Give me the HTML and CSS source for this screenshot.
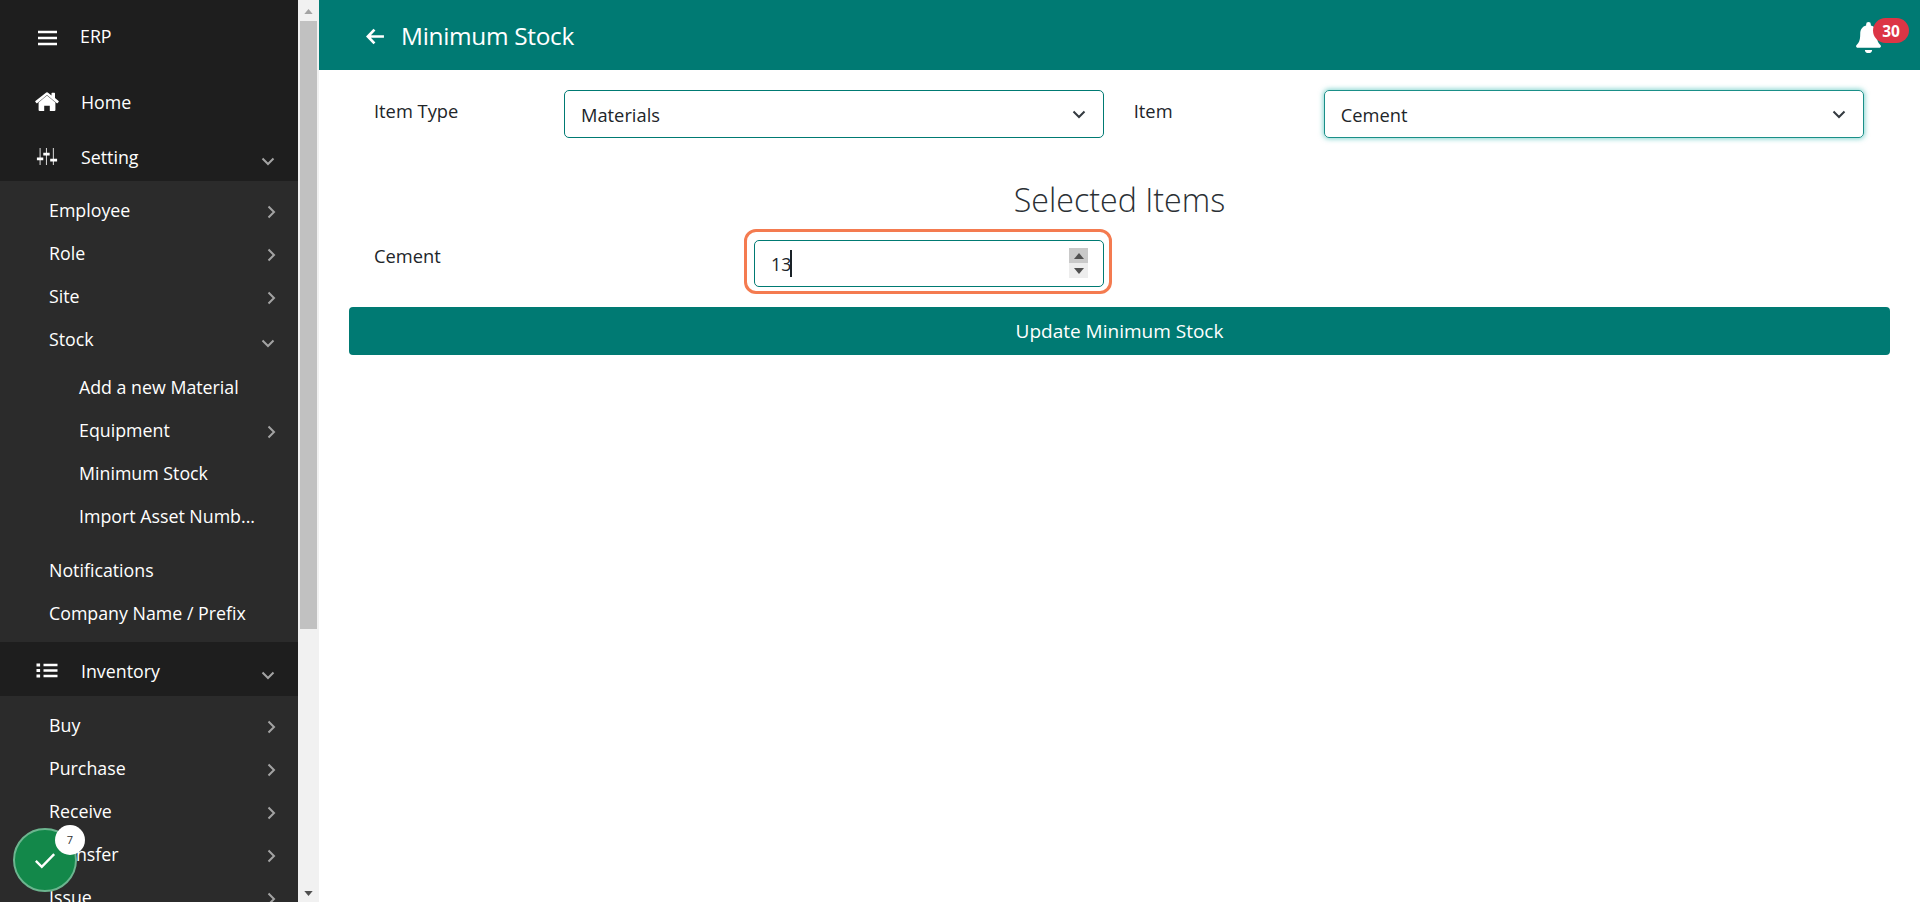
FILE: index.html
```html
<!DOCTYPE html>
<html lang="en">
<head>
<meta charset="utf-8">
<title>Minimum Stock</title>
<link rel="stylesheet" href="styles.css">
</head>
<body>
<div class="app">
  <aside class="sidebar">
    <div class="brand">
      <svg class="burger" viewBox="0 0 19 16"><path d="M0 2h19M0 8h19M0 14h19"/></svg>
      <span>ERP</span>
    </div>
    <nav>
      <div class="top home">
        <svg class="ticon house" viewBox="0 0 24 20"><path fill="#fff" d="M12 3.600 3.600 10.500V18a1 1 0 0 0 1 1h4.600v-5.200h5.600V19h4.600a1 1 0 0 0 1-1v-7.500L12 3.600zM23.600 9 20 6V1.400a.6.6 0 0 0-.6-.6h-2.300a.6.6 0 0 0-.6.6v2.100L13.400.9a2.200 2.200 0 0 0-2.800 0L.4 9a.6.6 0 0 0-.1.8l1 1.300a.6.6 0 0 0 .8.1L12 2.900l9.900 8.300a.6.6 0 0 0 .8-.1l1-1.300a.6.6 0 0 0-.1-.8z"/></svg>
        <span>Home</span>
      </div>
      <div class="top setting">
        <svg class="ticon" viewBox="0 0 19 16"><path class="thin" d="M3 0v16M9 0v16M15.500 0v16"/><path fill="#fff" d="M0 9h6v2.600H0zM6 4.500h6v2.600H6zM12.500 10H19v2.600h-6.500z"/></svg>
        <span>Setting</span>
        <svg class="down" viewBox="0 0 14 9"><path d="M1.500 1.500 7 7l5.500-5.500"/></svg>
      </div>
      <ul class="sub">
        <li>Employee<svg class="right" viewBox="0 0 9 14"><path d="M1.500 1.500 7 7l-5.500 5.500"/></svg></li>
        <li>Role<svg class="right" viewBox="0 0 9 14"><path d="M1.500 1.500 7 7l-5.500 5.500"/></svg></li>
        <li>Site<svg class="right" viewBox="0 0 9 14"><path d="M1.500 1.500 7 7l-5.500 5.500"/></svg></li>
        <li>Stock<svg class="down sm" viewBox="0 0 14 9"><path d="M1.500 1.500 7 7l5.500-5.500"/></svg></li>
        <li class="nested first">Add a new Material</li>
        <li class="nested">Equipment<svg class="right" viewBox="0 0 9 14"><path d="M1.500 1.500 7 7l-5.500 5.500"/></svg></li>
        <li class="nested">Minimum Stock</li>
        <li class="nested last">Import Asset Numb...</li>
        <li>Notifications</li>
        <li>Company Name / Prefix</li>
      </ul>
      <div class="top inventory">
        <svg class="ticon" viewBox="0 0 21 17"><path class="thick" d="M7 3h14M7 8.500h14M7 14h14"/><path fill="#fff" d="M0 1.500h3.600v3H0zM0 7h3.600v3H0zM0 12.500h3.600v3H0z"/></svg>
        <span>Inventory</span>
        <svg class="down" viewBox="0 0 14 9"><path d="M1.500 1.500 7 7l5.500-5.500"/></svg>
      </div>
      <ul class="sub">
        <li>Buy<svg class="right" viewBox="0 0 9 14"><path d="M1.500 1.500 7 7l-5.500 5.500"/></svg></li>
        <li>Purchase<svg class="right" viewBox="0 0 9 14"><path d="M1.500 1.500 7 7l-5.500 5.500"/></svg></li>
        <li>Receive<svg class="right" viewBox="0 0 9 14"><path d="M1.500 1.500 7 7l-5.500 5.500"/></svg></li>
        <li>Transfer<svg class="right" viewBox="0 0 9 14"><path d="M1.500 1.500 7 7l-5.500 5.500"/></svg></li>
        <li>Issue<svg class="right" viewBox="0 0 9 14"><path d="M1.500 1.500 7 7l-5.500 5.500"/></svg></li>
      </ul>
    </nav>
  </aside>
  <div class="scrollbar">
    <svg class="arrow" viewBox="0 0 10 6"><path d="M5 0l5 6H0z"/></svg>
    <div class="thumb"></div>
    <svg class="arrow" viewBox="0 0 10 6"><path d="M0 0h10L5 6z"/></svg>
  </div>
  <main class="main">
    <header class="header">
      <svg class="back" viewBox="0 0 18 16"><path d="M17 8H2M8 1.500 1.700 8 8 14.500"/></svg>
      <h1>Minimum Stock</h1>
      <div class="bell">
        <svg viewBox="0 0 24 30"><path fill="#fff" d="M12 0a2.300 2.300 0 0 0-2.300 2.300v1.200C6 4.400 4 7.500 4 11.500c0 6.500-1.500 8.500-3.300 10.500-.6.700-.7 1-.7 1.500 0 .9.700 1.500 1.600 1.500h20.800c.9 0 1.600-.6 1.600-1.500 0-.5-.1-.8-.7-1.500C21.500 20 20 18 20 11.500c0-4-2-7.100-5.700-8V2.300A2.300 2.300 0 0 0 12 0zM8.500 27a3.500 3 0 0 0 7 0z"/></svg>
        <span class="count">30</span>
      </div>
    </header>
    <section class="content">
      <div class="filters">
        <div class="field">
          <label>Item Type</label>
          <div class="select">Materials<svg viewBox="0 0 14 9"><path d="M1.500 1.500 7 7l5.500-5.500"/></svg></div>
        </div>
        <div class="field">
          <label>Item</label>
          <div class="select focus">Cement<svg viewBox="0 0 14 9"><path d="M1.500 1.500 7 7l5.500-5.500"/></svg></div>
        </div>
      </div>
      <h2>Selected Items</h2>
      <div class="stock-row">
        <label>Cement</label>
        <div class="highlight">
          <div class="number">
            <span class="val">13</span><span class="caret"></span>
            <div class="spin">
              <span class="up"><svg viewBox="0 0 10 6"><path d="M5 0l5 6H0z"/></svg></span>
              <span class="dn"><svg viewBox="0 0 10 6"><path d="M0 0h10L5 6z"/></svg></span>
            </div>
          </div>
        </div>
      </div>
      <button class="update" type="button">Update Minimum Stock</button>
    </section>
  </main>
</div>
<div class="fab">
  <svg viewBox="0 0 24 18"><path d="M2 9.500 8.500 16 22 2"/></svg>
  <span class="fab-count">7</span>
</div>
</body>
</html>
```
FILE: styles.css
```css
* { box-sizing: border-box; }
html, body { margin: 0; height: 100%; overflow: hidden; }
body { font-family: "Open Sans", "Noto Sans", sans-serif; color: #212529; background: #fff; }
svg { display: block; }

.app { display: flex; height: 902px; }

.sidebar { width: 298px; flex: none; height: 902px; overflow: hidden; background: #1e1e1e; color: #fff; font-size: 17.8px; }
.brand { height: 70px; display: flex; align-items: center; padding-left: 38px; gap: 23px; }
.brand span { margin-top: 1px; }
.burger { width: 19px; height: 16px; margin-top: 6px; fill: none; stroke: #fff; stroke-width: 2.6; }
.top { display: flex; align-items: center; padding-left: 35px; position: relative; }
.top.home { margin-top: 4px; height: 55px; }
.top.setting { height: 52px; padding-top: 3px; }
.top.inventory { height: 54px; padding-top: 3px; }
.top span { margin-left: 22px; }
.ticon { width: 24px; height: 17px; flex: none; }
.ticon.house { height: 20px; }
.thin { fill: none; stroke: #d0d0d0; stroke-width: 1; }
.thick { fill: none; stroke: #fff; stroke-width: 2.3; }
.down { width: 14px; height: 9px; margin-left: auto; margin-right: 23px; margin-top: 9px; fill: none; stroke: #a3a3a3; stroke-width: 2; }
.down.sm { margin-top: 9px; }
.right { width: 9px; height: 14px; margin-left: auto; margin-right: 22px; margin-top: 4px; fill: none; stroke: #a3a3a3; stroke-width: 2; }
.sub { list-style: none; margin: 0; padding: 7px 0 8px; background: #2b2b2b; }
.sub li { height: 43px; display: flex; align-items: center; padding-left: 49px; }
.sub li.nested { padding-left: 79px; }
.sub li.nested.first { margin-top: 5px; }
.sub li.nested.last { margin-bottom: 11px; }

.scrollbar { width: 21px; flex: none; background: #f1f1f1; display: flex; flex-direction: column; align-items: center; height: 902px; }
.arrow { width: 9px; height: 5px; fill: #a3a3a3; margin: 9px 0 7px; }
.arrow:last-child { fill: #505050; margin: auto 0 6px; }
.thumb { width: 17px; height: 608px; background: #c1c1c1; }

.main { flex: 1; min-width: 0; }
.header { height: 70px; background: #007a73; color: #fff; display: flex; align-items: center; padding-left: 47px; }
.back { width: 19px; height: 17px; fill: none; stroke: #fff; stroke-width: 2.6; margin-top: 3px; }
.header h1 { margin: 0 0 0 16px; font-size: 24.4px; font-weight: 400; letter-spacing: -0.3px; }
.bell { margin-left: auto; margin-right: 11px; position: relative; width: 54px; height: 34px; align-self: flex-start; margin-top: 18px; }
.bell svg { width: 27px; height: 31px; position: absolute; left: 0; top: 4px; }
.count { position: absolute; left: 18px; top: 0; width: 36px; height: 25px; border-radius: 13px; background: #dc3545; font-size: 15.5px; font-weight: 700; display: flex; align-items: center; justify-content: center; }

.content { padding: 20px 30px 0; }
.filters { display: flex; padding-left: 25px; }
.field { display: flex; width: 761px; }
.field label, .stock-row label { width: 190px; flex: none; font-size: 18.3px; margin-top: 7px; line-height: 28px; }
.field + .field { margin-left: 3.5px; }
.select { width: 540px; height: 48px; border: 1px solid #007a73; border-radius: 5px; display: flex; align-items: center; justify-content: space-between; padding: 1px 17px 0 16px; font-size: 18.3px; }
.select svg { width: 14px; height: 9px; fill: none; stroke: #343a40; stroke-width: 2; }
.select.focus { border-color: #1a8f88; box-shadow: 0 0 5px 1px rgba(32, 178, 170, .55); }
h2 { margin: 40px 0 0; height: 46px; text-align: center; font-size: 32.2px; font-weight: 300; line-height: 44px; color: #2b3035; }
.stock-row { display: flex; padding-left: 25px; height: 65px; margin-top: 5px; }
.stock-row label { width: 370px; margin-top: 13px; }
.highlight { width: 368px; height: 65px; border: 3px solid #f47b50; border-radius: 12px; padding: 8px 5px 4px 7px; }
.number { height: 47px; border: 1px solid #007a73; border-radius: 5px; display: flex; align-items: center; padding-left: 16px; font-size: 17.8px; position: relative; }
.caret { width: 2px; height: 27px; background: #1a2228; margin-left: -1px; }
.spin { position: absolute; right: 15px; top: 7px; width: 19px; height: 30px; display: flex; flex-direction: column; }
.spin span { height: 15px; display: flex; align-items: center; justify-content: center; background: #ededed; }
.spin .up { background: #c9c9c9; }
.spin svg { width: 10px; height: 6px; fill: #505050; }
.update { display: block; width: 100%; height: 48px; margin-top: 13px; border: 0; border-radius: 4px; background: #007a73; color: #fff; font-family: inherit; font-size: 19px; }

.fab { position: absolute; left: 13px; top: 828px; width: 64px; height: 64px; border-radius: 50%; background: #13884a; border: 2px solid #6cb58f; display: flex; align-items: center; justify-content: center; }
.fab svg { width: 22px; height: 17px; fill: none; stroke: #fff; stroke-width: 2.6; }
.fab-count { position: absolute; left: 40px; top: -5px; width: 30px; height: 30px; border-radius: 50%; background: #fff; color: #333; font-size: 11px; padding-bottom: 2px; display: flex; align-items: center; justify-content: center; }
```
